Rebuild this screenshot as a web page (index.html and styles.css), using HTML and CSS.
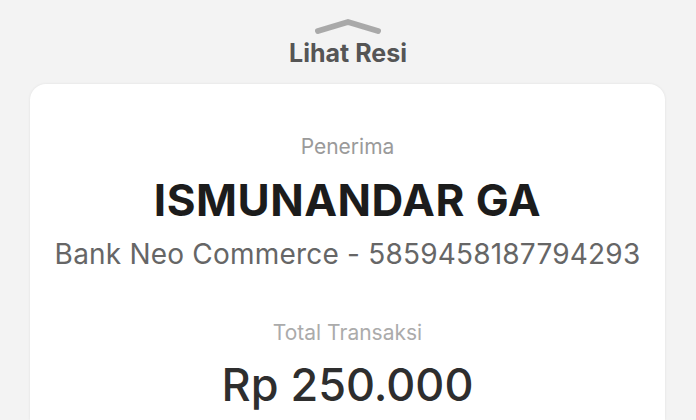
FILE: index.html
```html
<!DOCTYPE html>
<html lang="id">
<head>
<meta charset="utf-8">
<title>Lihat Resi</title>
<link rel="stylesheet" href="styles.css">
</head>
<body>
<div class="sheet">
  <header class="sheet-head">
    <svg class="handle" width="72" height="20" viewBox="0 0 72 20">
      <path d="M6 14 L36 5 L66 14" fill="none" stroke="#a9a9a9" stroke-width="6" stroke-linecap="round" stroke-linejoin="round"/>
    </svg>
    <h1 class="title">Lihat Resi</h1>
  </header>
  <section class="card">
    <div class="label">Penerima</div>
    <div class="name">ISMUNANDAR GA</div>
    <div class="account">Bank Neo Commerce - 5859458187794293</div>
    <div class="label total-label">Total Transaksi</div>
    <div class="amount">Rp 250.000</div>
  </section>
</div>
</body>
</html>
```

FILE: styles.css
```css
* { box-sizing: border-box; }
html, body {
  margin: 0;
  padding: 0;
  background: #f3f3f3;
  font-family: Inter, "Noto Sans", sans-serif;
  overflow: hidden;
}
.sheet {
  width: 696px;
  height: 420px;
  display: flex;
  flex-direction: column;
  align-items: center;
}
.sheet-head {
  display: flex;
  flex-direction: column;
  align-items: center;
  padding-top: 17px;
}
.handle {
  display: block;
  margin-left: 1px;
}
.title {
  margin: 0;
  font-size: 25px;
  line-height: 32px;
  font-weight: 700;
  color: #555555;
}
.card {
  margin-top: 15px;
  width: 635px;
  flex: 1;
  background: #ffffff;
  border-radius: 16px 16px 0 0;
  box-shadow: 0 0 3px rgba(0,0,0,0.08);
  display: flex;
  flex-direction: column;
  align-items: center;
  padding-top: 50px;
  margin-left: -1px;
}
.label {
  font-size: 21px;
  line-height: 26px;
  color: #9a9a9a;
  font-weight: 400;
}
.name {
  margin-top: 14px;
  font-size: 44px;
  line-height: 52px;
  font-weight: 700;
  letter-spacing: 0.5px;
  color: #1c1c1c;
}
.account {
  margin-top: 11px;
  font-size: 28px;
  line-height: 34px;
  letter-spacing: 0.2px;
  color: #666666;
}
.total-label {
  margin-top: 49px;
  color: #ababab;
}
.amount {
  margin-top: 12px;
  font-size: 45px;
  line-height: 54px;
  font-weight: 500;
  color: #2e2e2e;
}
```
